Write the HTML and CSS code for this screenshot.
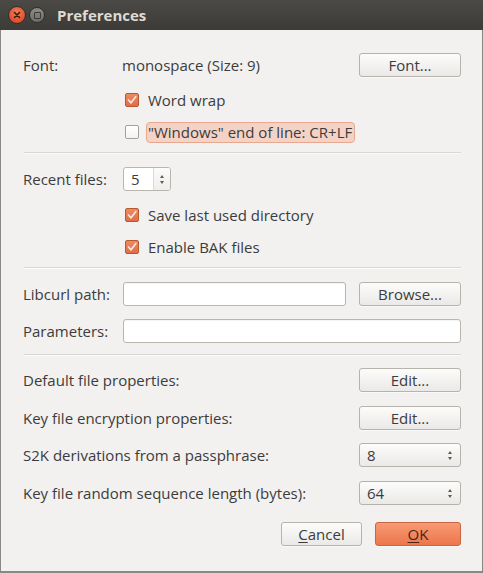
FILE: index.html
```html
<!DOCTYPE html>
<html>
<head>
<meta charset="utf-8">
<link rel="stylesheet" href="styles.css">
</head>
<body>
<div class="window">
  <div class="titlebar">
    <span class="wbtn close"><svg width="8" height="8" viewBox="0 0 8 8"><path d="M1.5 1.5 L6.5 6.5 M6.5 1.5 L1.5 6.5" stroke="#3a1a10" stroke-width="1.6" stroke-linecap="round"/></svg></span>
    <span class="wbtn mini"><span class="sq"></span></span>
    <span class="title">Preferences</span>
  </div>
  <div class="content">
    <div class="row r-font">
      <span class="label">Font:</span>
      <span class="value">monospace (Size: 9)</span>
      <button class="btn">Font...</button>
    </div>
    <div class="row check r-wrap">
      <span class="cb on"><svg width="10" height="10" viewBox="0 0 10 10"><path d="M1.5 5 L4 7.8 L8.7 1.8" fill="none" stroke="#fbe4d9" stroke-width="1.8" stroke-linecap="round" stroke-linejoin="round"/></svg></span>
      <span>Word wrap</span>
    </div>
    <div class="row check r-eol">
      <span class="cb"></span>
      <span class="hl">"Windows" end of line: CR+LF</span>
    </div>
    <div class="sep s1"></div>
    <div class="row r-recent">
      <span class="label">Recent files:</span>
      <span class="spin">
        <span class="spin-val">5</span>
        <span class="spin-arrows"><span class="up"></span><span class="down"></span></span>
      </span>
    </div>
    <div class="row check r-save">
      <span class="cb on"><svg width="10" height="10" viewBox="0 0 10 10"><path d="M1.5 5 L4 7.8 L8.7 1.8" fill="none" stroke="#fbe4d9" stroke-width="1.8" stroke-linecap="round" stroke-linejoin="round"/></svg></span>
      <span>Save last used directory</span>
    </div>
    <div class="row check r-bak">
      <span class="cb on"><svg width="10" height="10" viewBox="0 0 10 10"><path d="M1.5 5 L4 7.8 L8.7 1.8" fill="none" stroke="#fbe4d9" stroke-width="1.8" stroke-linecap="round" stroke-linejoin="round"/></svg></span>
      <span>Enable BAK files</span>
    </div>
    <div class="sep s2"></div>
    <div class="row r-curl">
      <span class="label">Libcurl path:</span>
      <span class="entry grow"></span>
      <button class="btn">Browse...</button>
    </div>
    <div class="row r-params">
      <span class="label">Parameters:</span>
      <span class="entry grow"></span>
    </div>
    <div class="sep s3"></div>
    <div class="row r-def">
      <span class="label wide">Default file properties:</span>
      <button class="btn">Edit...</button>
    </div>
    <div class="row r-key">
      <span class="label wide">Key file encryption properties:</span>
      <button class="btn">Edit...</button>
    </div>
    <div class="row r-s2k">
      <span class="label wide">S2K derivations from a passphrase:</span>
      <span class="cspin"><span class="cspin-val">8</span><span class="spin-arrows"><span class="up"></span><span class="down"></span></span></span>
    </div>
    <div class="row r-rand">
      <span class="label wide">Key file random sequence length (bytes):</span>
      <span class="cspin"><span class="cspin-val">64</span><span class="spin-arrows"><span class="up"></span><span class="down"></span></span></span>
    </div>
    <div class="actions">
      <button class="btn cancel"><u>C</u>ancel</button>
      <button class="btn ok"><u>O</u>K</button>
    </div>
  </div>
</div>
</body>
</html>
```
FILE: styles.css
```css
* { box-sizing: border-box; }
html, body { margin: 0; padding: 0; }
body {
  width: 483px;
  height: 573px;
  overflow: hidden;
  background: #f2f1f0;
  font-family: "Open Sans", "Noto Sans", sans-serif;
  font-size: 15px;
  color: #3c3c3c;
}
.window {
  width: 483px;
  height: 573px;
  background: #f2f1f0;
  border-left: 1px solid #8a8884;
  border-right: 1px solid #8a8884;
  border-bottom: 2px solid #8a8884;
  display: flex;
  flex-direction: column;
}
.titlebar {
  height: 30px;
  flex: none;
  background: linear-gradient(#4b4a46, #3c3b37);
  display: flex;
  align-items: center;
  padding-left: 8px;
  margin: 0 -1px;
}
.wbtn {
  border-radius: 50%;
  display: inline-flex;
  align-items: center;
  justify-content: center;
}
.close {
  width: 18px;
  height: 18px;
  background: radial-gradient(circle at 50% 35%, #f37e55, #df4f2a 70%);
  border: 1px solid #2f2e2b;
}
.mini {
  width: 16px;
  height: 16px;
  margin-left: 3px;
  background: linear-gradient(#8c8b86, #6e6d69);
  border: 1px solid #2f2e2b;
}
.mini .sq {
  width: 7px;
  height: 7px;
  border: 1px solid #3c3b37;
  border-radius: 1px;
}
.title {
  margin-left: 12px;
  font-weight: bold;
  font-size: 15px;
  color: #dfdbd2;
}
.content {
  padding: 23px 21px 0 22px;
  display: flex;
  flex-direction: column;
}
.row {
  display: flex;
  align-items: center;
  height: 24px;
  flex: none;
}
.label { width: 100px; flex: none; }
.label.wide { width: auto; flex: 1; }
.value { flex: 1; margin-left: -1px; }
.btn {
  font-family: inherit;
  font-size: 15px;
  color: #3c3c3c;
  width: 102px;
  height: 24px;
  flex: none;
  border: 1px solid #b6b3ad;
  border-radius: 3px;
  background: linear-gradient(#fcfcfb, #eae9e7);
  box-shadow: 0 1px 0 rgba(255,255,255,0.6);
  padding: 0;
  margin-left: 13px;
}
.grow { flex: 1; }
.entry {
  height: 24px;
  background: #fff;
  border: 1px solid #b9b6b0;
  border-radius: 3px;
  box-shadow: inset 0 1px 1px rgba(0,0,0,0.05);
}
.check { padding-left: 102px; height: 22px; }
.cb {
  width: 14px;
  height: 14px;
  border: 1px solid #a3a19c;
  border-radius: 2px;
  background: linear-gradient(#ffffff, #f3f3f2);
  margin-right: 9px;
  display: inline-flex;
  align-items: center;
  justify-content: center;
  flex: none;
}
.cb.on {
  background: linear-gradient(#ec8a63, #dd6f47);
  border-color: #b8582f;
}
.hl {
  background: #f4d3c6;
  border: 1px solid #e7a890;
  border-radius: 4px;
  padding: 0 2px 0 1px;
  margin-left: -2px;
  line-height: 19px;
}
.r-wrap { margin-top: 12px; }
.r-eol { margin-top: 10px; }
.sep { flex: none; margin-left: 1px; height: 2px; background: #d9d7d3; border-bottom: 1px solid #fbfbfa; }
.s1 { margin-top: 9px; }
.r-recent { margin-top: 13px; }
.spin {
  display: flex;
  width: 48px;
  height: 24px;
  background: #fff;
  border: 1px solid #b9b6b0;
  border-radius: 3px;
}
.spin-val { flex: 1; padding-left: 7px; line-height: 22px; }
.spin .spin-arrows {
  width: 17px;
  border-left: 1px solid #dcdad6;
  background: linear-gradient(#fbfbfa, #efeeec);
  border-radius: 0 2px 2px 0;
}
.spin-arrows {
  display: flex;
  flex-direction: column;
  align-items: center;
  justify-content: center;
  gap: 3px;
}
.up, .down {
  width: 0;
  height: 0;
  border-left: 2.5px solid transparent;
  border-right: 2.5px solid transparent;
}
.up { border-bottom: 3px solid #5c5b57; }
.down { border-top: 3px solid #5c5b57; }
.r-save { margin-top: 13px; }
.r-bak { margin-top: 10px; }
.s2 { margin-top: 9px; }
.r-curl { margin-top: 13px; }
.r-params { margin-top: 13px; }
.s3 { margin-top: 11px; }
.r-def { margin-top: 12px; }
.r-key { margin-top: 14px; }
.r-s2k { margin-top: 13px; }
.r-rand { margin-top: 14px; }
.cspin {
  width: 102px;
  height: 24px;
  flex: none;
  display: flex;
  border: 1px solid #b6b3ad;
  border-radius: 3px;
  background: linear-gradient(#fcfcfb, #eae9e7);
}
.cspin-val { flex: 1; padding-left: 7px; line-height: 22px; }
.cspin .spin-arrows { width: 16px; padding-right: 4px; }
.actions {
  display: flex;
  justify-content: flex-end;
  margin-top: 17px;
}
.cancel { width: 81px; margin-left: 0; }
.ok {
  width: 86px;
  margin-left: 13px;
  background: linear-gradient(#f79a74, #ed764b);
  border-color: #c96540;
  color: #4a2516;
}
u { text-decoration-thickness: 1px; text-underline-offset: 2px; }
```
